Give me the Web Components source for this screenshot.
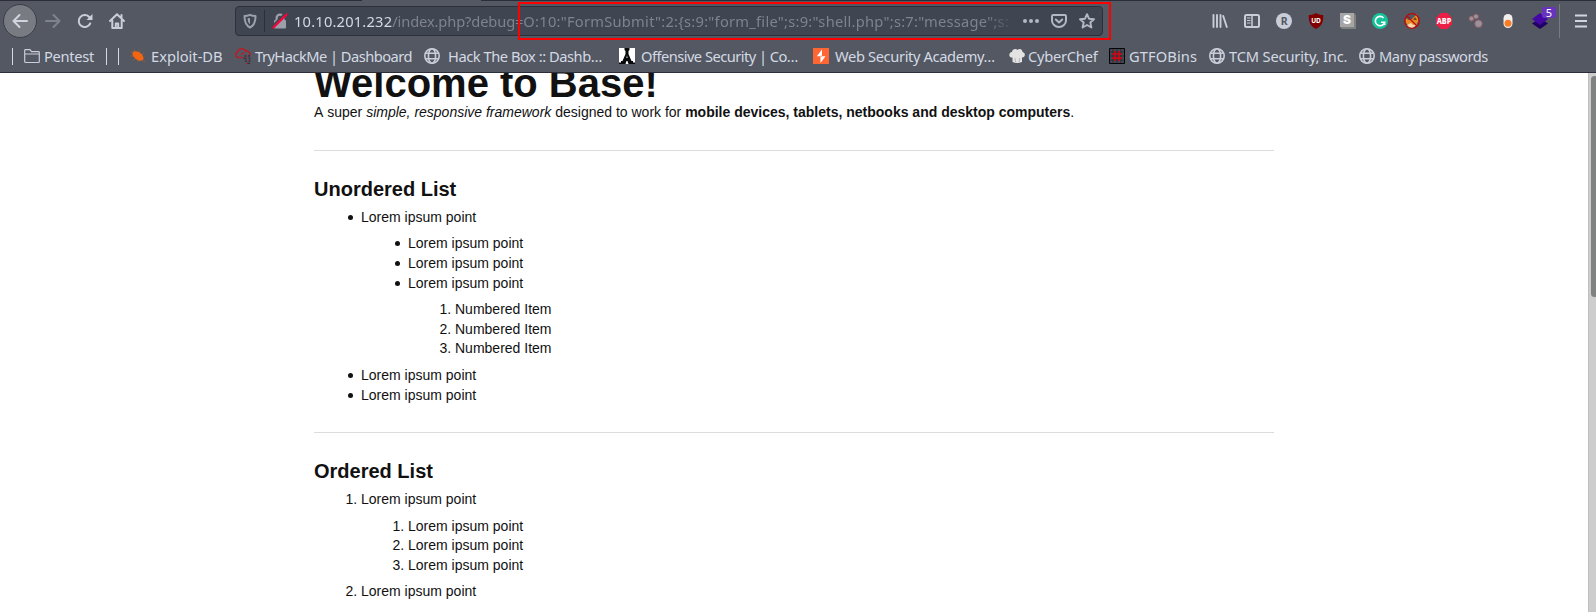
<!DOCTYPE html>
<html lang="en"><head><meta charset="utf-8"><title>Base</title>
<style>html,body{margin:0;height:100%;overflow:hidden;background:#fff}</style></head>
<body><browser-window></browser-window>
<script>
const ICONS={
back:'<path d="M15 8H1.500M7.500 2 1.500 8l6 6" fill="none" stroke="#d0d4de" stroke-width="2" stroke-linecap="round" stroke-linejoin="round"/>',
forward:'<path d="M1 8h13.500M8.500 2l6 6-6 6" fill="none" stroke="#7f838e" stroke-width="2" stroke-linecap="round" stroke-linejoin="round"/>',
reload:'<path d="M13.200 10.500A6 6 0 1 1 12 3.800L13.500 5.500" fill="none" stroke="#c9cdd9" stroke-width="2" stroke-linecap="round"/><path d="M15.500 1v6h-6z" fill="#c9cdd9"/>',
home:'<path d="M1 8 8 1.300 15 8M3.300 7.500V15h9.400V7.500M6.800 15v-4.500h2.400V15M12.500 2v3" fill="none" stroke="#c9cdd9" stroke-width="2" stroke-linecap="round" stroke-linejoin="round"/>',
shield:'<path d="M8 1.800C6 2.700 4 3 2.500 3.100c0 5 .700 9.300 5.500 11.400 4.800-2.100 5.500-6.400 5.500-11.400C12 3 10 2.700 8 1.800z" fill="none" stroke="#9ba0ab" stroke-width="2" stroke-linejoin="round"/><path d="M8 5v6.300C6 10 5.700 7.700 5.600 5.300z" fill="#9ba0ab"/>',
lock:'<path d="M4.600 8V5a3.400 3.400 0 0 1 6.800 0v3" fill="none" stroke="#9ba0ab" stroke-width="2.200"/><rect x="2" y="7" width="12" height="8.500" rx="1.200" fill="#9ba0ab"/><path d="m0 13.500 13-13" stroke="#404552" stroke-width="2"/><path d="m1.500 14.500L14.500 1.500" stroke="#ff0039" stroke-width="2.200" stroke-linecap="round"/>',
dots:'<g fill="#b4b8c2"><circle cx="2" cy="8" r="2"/><circle cx="8" cy="8" r="2"/><circle cx="14" cy="8" r="2"/></g>',
pocket:'<path d="M2.200 2h11.600Q15 2 15 3.200V7.500A7 6.500 0 0 1 1 7.500V3.200Q1 2 2.200 2zM4.800 6.500 8 9.500l3.200-3" fill="none" stroke="#b4b8c2" stroke-width="2" stroke-linecap="round" stroke-linejoin="round"/>',
star:'<path d="m8 1.200 2 4.500 5 .5-3.700 3.300 1.100 5L8 12l-4.400 2.500 1.100-5L1 6.200l5-.5z" fill="none" stroke="#b4b8c2" stroke-width="1.900" stroke-linejoin="round"/>',
library:'<path d="M1.500 2v12M5 2v12M8.500 2v12M11.200 3l3.600 11" stroke="#c9cdd9" stroke-width="1.900" stroke-linecap="round"/>',
sidebar:'<rect x="1" y="2" width="14" height="12" rx="1.500" fill="none" stroke="#c9cdd9" stroke-width="2"/><path d="M8 2v12" stroke="#c9cdd9" stroke-width="1.500"/><path d="M3 5h3.500M3 7.500h3.500M3 10h3.500" stroke="#c9cdd9"/>',
r:'<circle cx="8" cy="8" r="8" fill="#c9cdd9"/><text x="8.200" y="11.700" text-anchor="middle" font-size="10.500" font-weight="700" fill="#545863">R</text>',
ublock:'<path d="M8 0c2.500 1.500 4.500 2 7.200 2C15.500 9 14 13 8 16 2 13 .500 9 .800 2 3.500 2 5.500 1.500 8 0z" fill="#800000"/><text x="8" y="9.800" text-anchor="middle" font-size="6.500" font-weight="700" fill="#fff">UD</text>',
s:'<path d="m14 0 2 2v14H2l-2-2z" fill="#808080"/><path d="M0 0h14v14H0z" fill="#a6a6a6"/><text x="7" y="11.200" text-anchor="middle" font-size="12" font-weight="900" style="font-family:Inter" fill="#fff">S</text>',
gram:'<circle cx="8" cy="8" r="8" fill="#15c39a"/><path d="M11.600 5A4.700 4.700 0 1 0 12.600 9.200H9M12.600 9v3" fill="none" stroke="#fff" stroke-width="1.600"/>',
fox:'<path d="m1 5 4 2 3-1 5-5 1.500 7-3 5H5L2 10z" fill="#e78b24"/><path d="m3 12 4-2 2 2 4-1-4 4H5z" fill="#f6d7ae"/><path d="m9 7 2-3 2 3z" fill="#774519"/><circle cx="8" cy="8" r="7.300" fill="none" stroke="#bc0909" stroke-width="1.300"/><path d="m3 3 10 10" stroke="#bc0909" stroke-width="1.300"/>',
abp:'<path d="M4.700 0h6.600L16 4.700v6.600L11.300 16H4.700L0 11.300V4.700z" fill="#ed1e45"/><text x="8" y="11" text-anchor="middle" font-size="8.400" textLength="14.600" lengthAdjust="spacingAndGlyphs" font-weight="800" fill="#fff">ABP</text>',
mol:'<g fill="#9a929b" stroke="#85545d"><circle cx="3.500" cy="5.500" r="2.600"/><circle cx="8" cy="3.500" r="2.600"/><circle cx="10.500" cy="10.700" r="3.900"/></g>',
toggle:'<rect x="3.500" y="1" width="9" height="14" rx="4.500" fill="#f1eeeb"/><circle cx="8" cy="10.200" r="3.500" fill="#f77d26"/>',
layers:'<path d="m8 5 8 5.500-8 5.500-8-5.500z" fill="#210064"/><path d="m8 0 8 6-8 6-8-6z" fill="#4408a5"/>',
menu:'<path d="M2 2.500h12M2 8h12M2 13.500h12" stroke="#d2d5df" stroke-width="2"/>',
folder:'<path d="M.700 13.500v-11q0-.8.800-.8H6l1.500 2h7q.8 0 .8.800v9q0 1-.8 1h-13q-.8 0-.8-1zM1 6h14" fill="none" stroke="#c9cdd9" stroke-width="1.200"/>',
bug:'<path d="M1 3l5 4M4 1l2 5M0 8h5M3 12l4-2M9 2l1 4M14 5l-3 2M8 14v-3M15 14l-3-2" stroke="#b9622f" stroke-width=".600"/><ellipse cx="8" cy="8" rx="6.300" ry="3.700" transform="rotate(35 8 8)" fill="#f3650f"/>',
cloud:'<path d="M8 9.500H3.500a2.900 2.900 0 0 1-.6-5.700C3.500-.2 9.500-.3 10.500 3.200c3-.7 5.500 2 4 4.600M6.500 7q.5-2 3-1.600" fill="none" stroke="#b3202b" stroke-width="1.500"/><path d="M9.500 8h2m1.500 0h2M8.500 10.500h3m2 0h2M10 13h2m1.500 0h2M12 15.300h3" stroke="#30323d" stroke-width="1.300"/><path d="M11.500 8h1M11.500 10.500h1M13 13h1M11 15.300h1.500" stroke="#b3202b" stroke-width="1.200"/>',
globe:'<g fill="none" stroke="#c9cdd9" stroke-width="1.600"><circle cx="8" cy="8" r="7.200"/><ellipse cx="8" cy="8" rx="3.600" ry="7.200"/><path d="M1.500 5.300h13M1.500 10.700h13"/></g>',
offsec:'<path d="M0 0h16v16H0z" fill="#fff"/><path d="M5.500 0h5v2l-1 1v3l3 7h1.500v3h-4.500L8.500 13h-1L6.500 16H2v-3h1.500l3-7V3l-1-1z" fill="#08090b"/><path d="M0 14.500h3v1.500H0zM13 14.500h3v1.500h-3z" fill="#08090b"/><path d="m8 7 .8 3H7.200z" fill="#aaa"/>',
burp:'<path d="M0 0h16v16H0z" fill="#ff6633"/><path d="M9 1.500 3.800 8.200H7.500V15l5-6.800H9z" fill="#fff"/><path d="M7.500 8.200H9" stroke="#ff6633" stroke-width=".700"/>',
chef:'<path d="M3.500 14V9.500C-.5 10-.8 4.500 3 4 3 1 7 0 8.500 2c2-2 5-.5 5 2 3.500.8 3 5.500-.5 5.500V14q-5 2-9.500 0z" fill="#e3e3e3"/><path d="m6 10 .5 4M10.500 10l-.3 4" stroke="#b7b7b7"/>',
gtfo:'<path d="M.5.5h15v15H.5z" fill="#454852" stroke="#050507"/><path d="M1 4h14M1 8h14M1 12h14M4 1v14M8 1v14M12 1v14" stroke="#24262e" stroke-width=".700"/><path d="M6 3v10M10.200 3v10M3 6h10M3 10.200h10" stroke="#c90914" stroke-width="1.700"/>'
};
const define=(name,html)=>customElements.define(name,class extends HTMLElement{
 constructor(){super();this.attachShadow({mode:'open'}).innerHTML=html}
});
customElements.define('ui-icon',class extends HTMLElement{
 connectedCallback(){if(!this.shadowRoot)this.attachShadow({mode:'open'}).innerHTML=`<style>:host{display:block;width:16px;height:16px;flex:none;letter-spacing:0}svg{display:block;width:100%;height:100%;font-family:"Noto Sans",sans-serif;overflow:visible}</style><svg viewBox="0 0 16 16">${ICONS[this.getAttribute('name')]}</svg>`}
});
define('book-mark',`<style>:host{display:flex;align-items:center;height:24px;white-space:pre;flex:none}span{margin-left:var(--gap,4px)}</style><slot name="icon"></slot><span><slot></slot></span>`);
define('bookmarks-bar',`<style>:host{display:flex;height:30px;align-items:center;margin-top:-1px;padding-left:12px;color:#d3dae3;font:14.67px/20px "Noto Sans",sans-serif}
i{width:1px;height:17px;background:#d3dae3;flex:none;margin-right:11px}book-mark{width:var(--w);letter-spacing:var(--ls)}</style>
<i></i>
<book-mark style="--w:82px;--ls:-.3px"><ui-icon slot="icon" name="folder"></ui-icon>Pentest</book-mark><i></i><i></i>
<book-mark style="--w:105px;--ls:0px;--gap:5px"><ui-icon slot="icon" name="bug"></ui-icon>Exploit-DB</book-mark>
<book-mark style="--w:189px;--ls:-.53px"><ui-icon slot="icon" name="cloud"></ui-icon>TryHackMe | Dashboard</book-mark>
<book-mark style="--w:195px;--ls:-.46px;--gap:8px"><ui-icon slot="icon" name="globe"></ui-icon>Hack The Box :: Dashb…</book-mark>
<book-mark style="--w:194px;--ls:-.53px;--gap:6px"><ui-icon slot="icon" name="offsec"></ui-icon>Offensive Security | Co…</book-mark>
<book-mark style="--w:196px;--ls:-.36px;--gap:6px"><ui-icon slot="icon" name="burp"></ui-icon>Web Security Academy…</book-mark>
<book-mark style="--w:100px;--ls:-.25px;--gap:3px"><ui-icon slot="icon" name="chef"></ui-icon>CyberChef</book-mark>
<book-mark style="--w:100px;--ls:.1px;--gap:4px"><ui-icon slot="icon" name="gtfo"></ui-icon>GTFOBins</book-mark>
<book-mark style="--w:150px;--ls:-.17px"><ui-icon slot="icon" name="globe"></ui-icon>TCM Security, Inc.</book-mark>
<book-mark style="--w:150px;--ls:-.46px"><ui-icon slot="icon" name="globe"></ui-icon>Many passwords</book-mark>`);
define('address-bar',`<style>:host{display:flex;align-items:center;box-sizing:border-box;width:868px;height:30px;border:1px solid #2d303b;border-radius:4px;background:#404552;padding:0 6px;font:14.67px/20px "Noto Sans",sans-serif;color:#7f838d}
.sep{width:1px;height:22px;background:#2d303b;margin:0 7px 0 6px}.url{width:722px;white-space:pre;overflow:hidden;margin:0 0 1px 6px;padding-right:1px;letter-spacing:.26px;-webkit-mask-image:linear-gradient(90deg,#000 690px,transparent 722px)}b{font-weight:400;color:#d3dae3;letter-spacing:.2px}em{font-style:normal;letter-spacing:-.12px}.actions{display:flex;gap:12px;margin-left:6px}</style>
<ui-icon name="shield"></ui-icon><div class="sep"></div><ui-icon name="lock"></ui-icon><div class="url"><b>10.10.201.232</b><em>/index.php?debug=</em>O:10:"FormSubmit":2:{s:9:"form_file";s:9:"shell.php";s:7:"message";s:</div><div class="actions"><ui-icon name="dots"></ui-icon><ui-icon name="pocket"></ui-icon><ui-icon name="star"></ui-icon></div>`);
define('nav-bar',`<style>:host{display:flex;align-items:center;height:42px;padding-left:3px}.back{box-sizing:border-box;width:34px;height:34px;border:1px solid #3b3e47;border-radius:50%;background:#797b82;display:grid;place-items:center}.nav{display:flex;gap:16px;margin-left:8px;width:80px}address-bar{margin-left:110px}.ext{display:flex;gap:16px;margin-left:109px}.badge-wrap{position:relative}.badge{position:absolute;left:10px;top:-6px;width:14px;height:11px;border-radius:2px;background:#6833bd;color:#fff;font:11px/11px "Noto Sans",sans-serif;text-align:center}.line{width:1px;height:34px;background:#787b85;margin:0 13px 0 11px}</style>
<div class="back"><ui-icon name="back"></ui-icon></div><div class="nav"><ui-icon name="forward"></ui-icon><ui-icon name="reload"></ui-icon><ui-icon name="home"></ui-icon></div><address-bar></address-bar>
<div class="ext"><ui-icon name="library"></ui-icon><ui-icon name="sidebar"></ui-icon><ui-icon name="r"></ui-icon><ui-icon name="ublock"></ui-icon><ui-icon name="s"></ui-icon><ui-icon name="gram"></ui-icon><ui-icon name="fox"></ui-icon><ui-icon name="abp"></ui-icon><ui-icon name="mol"></ui-icon><ui-icon name="toggle"></ui-icon><div class="badge-wrap"><ui-icon name="layers"></ui-icon><div class="badge">5</div></div></div><div class="line"></div><ui-icon name="menu"></ui-icon>`);
define('page-content',`<style>:host{display:block;width:960px;margin-left:314px;color:#111;font:14px/19.6px "Liberation Sans",Arial,sans-serif}h1{font-size:40px;line-height:40px;margin:-10px 0 0}p{margin:0;font-kerning:none}h2{font-size:20px;line-height:28px;height:25.6px;margin:0}hr{border:0;height:1px;background:#ddd;margin:26.9px 0 24.4px}p+hr{margin-top:27.2px}ul,ol{margin:7px 0 7px 7px;padding:0 0 0 40px}ul{list-style:none}ul>li::before{content:"";display:inline-block;width:5px;height:5px;border-radius:50%;background:#111;margin:0 7.600px 0 -12.600px;vertical-align:2px}</style>
<h1>Welcome to Base!</h1><p>A super <em>simple, responsive framework</em> designed to work for <strong>mobile devices, tablets, netbooks and desktop computers</strong>.</p><hr>
<h2>Unordered List</h2><ul><li>Lorem ipsum point<ul><li>Lorem ipsum point</li><li>Lorem ipsum point</li><li>Lorem ipsum point<ol><li>Numbered Item</li><li>Numbered Item</li><li>Numbered Item</li></ol></li></ul></li><li>Lorem ipsum point</li><li>Lorem ipsum point</li></ul><hr>
<h2>Ordered List</h2><ol><li>Lorem ipsum point<ol><li>Lorem ipsum point</li><li>Lorem ipsum point</li><li>Lorem ipsum point</li></ol></li><li>Lorem ipsum point</li></ol>`);
define('scroll-bar',`<style>:host{display:block;box-sizing:border-box;width:8px;background:#cdcdcd;border-left:1px solid #c2bfba;padding:3px 0 0 2px;overflow:hidden}div{width:7px;height:221px;border-radius:4px;background:#7f8280}</style><div></div>`);
define('browser-window',`<style>:host{display:flex;flex-direction:column;height:612px;overflow:hidden;position:relative}header{box-sizing:border-box;height:73px;flex:none;background:#545863;border-bottom:1px solid #2b2e39}.tabs{height:1px;background:linear-gradient(90deg,#2b2e39 362px,#545863 362px 481px,#2b2e39 481px)}nav-bar{margin-top:-1px}main{display:flex;flex:1;overflow:hidden}.view{flex:1;overflow:hidden;display:flow-root}.mark{position:absolute;box-sizing:border-box;left:518px;top:2px;width:593px;height:38px;border:2px solid #f00}</style>
<header><div class="tabs"></div><nav-bar></nav-bar><bookmarks-bar></bookmarks-bar></header><main><div class="view"><page-content></page-content></div><scroll-bar></scroll-bar></main><div class="mark"></div>`);
</script></body></html>
